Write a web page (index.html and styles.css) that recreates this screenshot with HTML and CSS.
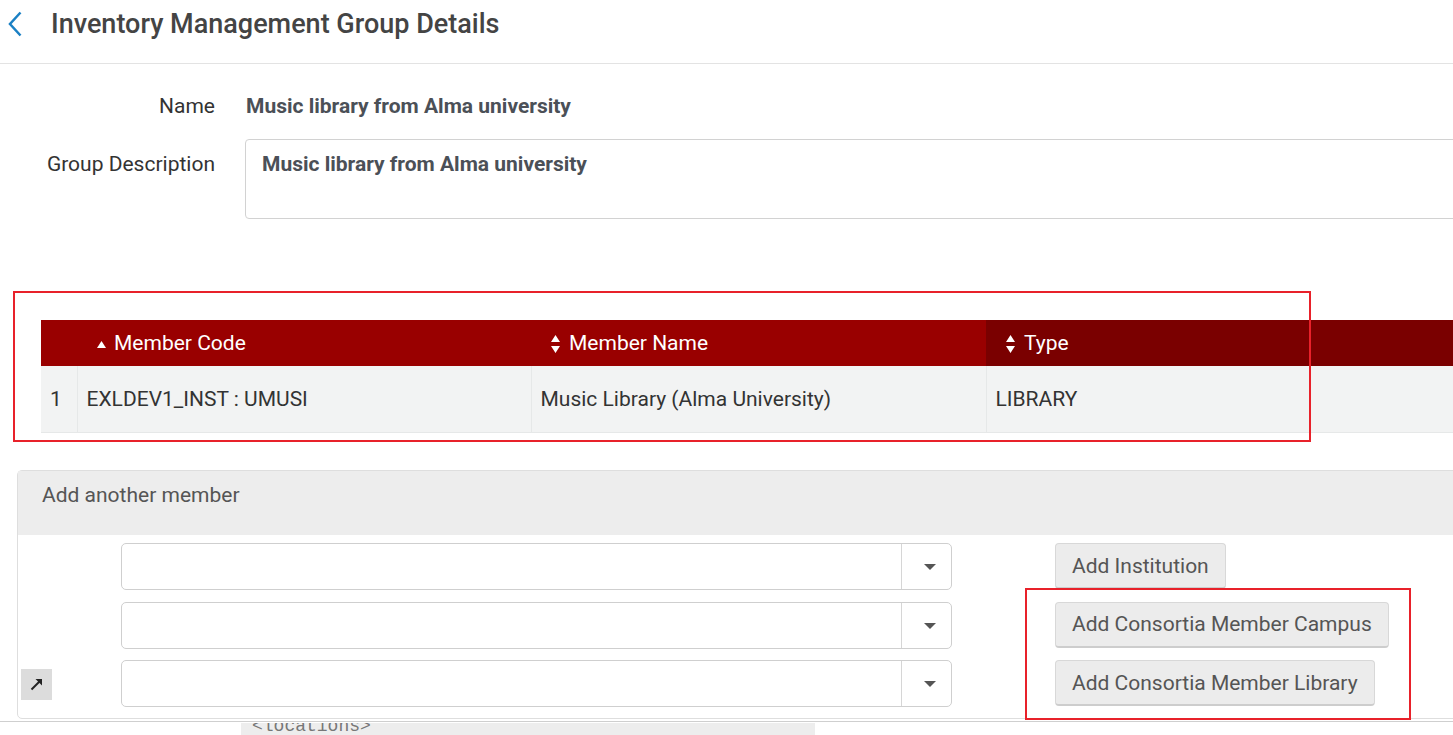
FILE: index.html
```html
<!DOCTYPE html>
<html lang="en">
<head>
    <meta charset="UTF-8">
    <meta name="viewport" content="width=device-width, initial-scale=1.0">
    <title>Inventory Management Group Details</title>
    <link rel="stylesheet" href="styles.css">
</head>
<body>
    <header class="page-header">
        <button class="back-btn" aria-label="Back">
            <svg width="16" height="26" viewBox="0 0 16 26"><path d="M13.5 1.5 L3 13 L13.5 24.5" fill="none" stroke="#1b80c4" stroke-width="2.5"/></svg>
        </button>
        <h1>Inventory Management Group Details</h1>
    </header>

    <section class="details">
        <div class="field-row name-row">
            <label class="field-label">Name</label>
            <div class="field-value">Music library from Alma university</div>
        </div>
        <div class="field-row desc-row">
            <label class="field-label desc-label">Group Description</label>
            <div class="desc-box">Music library from Alma university</div>
        </div>
    </section>

    <section class="members">
        <div class="annotation members-mark"></div>
        <table class="members-table">
            <colgroup>
                <col class="w-index">
                <col class="w-code">
                <col class="w-name">
                <col>
            </colgroup>
            <thead>
                <tr>
                    <th><span class="th-inner"></span></th>
                    <th class="th-sort"><span class="th-inner"><svg class="sort-up" width="9" height="7" viewBox="0 0 9 7"><path d="M0 7 L4.5 0 L9 7 Z" fill="#fff"/></svg>Member Code</span></th>
                    <th class="th-sort"><span class="th-inner"><svg class="sort-both" width="9" height="20" viewBox="0 0 9 20"><path d="M0 8 L4.5 1 L9 8 Z M0 12 L4.5 19 L9 12 Z" fill="#fff"/></svg>Member Name</span></th>
                    <th class="th-sort col-type"><span class="th-inner"><svg class="sort-both" width="9" height="20" viewBox="0 0 9 20"><path d="M0 8 L4.5 1 L9 8 Z M0 12 L4.5 19 L9 12 Z" fill="#fff"/></svg>Type</span></th>
                </tr>
            </thead>
            <tbody>
                <tr>
                    <td class="col-index">1</td>
                    <td>EXLDEV1_INST : UMUSI</td>
                    <td>Music Library (Alma University)</td>
                    <td>LIBRARY</td>
                </tr>
            </tbody>
        </table>
    </section>

    <section class="add-panel">
        <div class="panel-title">Add another member</div>
        <div class="panel-body">
            <div class="row-side"></div>
            <div class="select-box"><span class="select-text"></span><span class="select-caret"></span></div>
            <div class="row-action"><button class="btn">Add Institution</button></div>

            <div class="row-side"></div>
            <div class="select-box"><span class="select-text"></span><span class="select-caret"></span></div>
            <div class="row-action"><button class="btn">Add Consortia Member Campus</button></div>

            <div class="row-side">
                <span class="expand-btn">
                    <svg width="16" height="16" viewBox="0 0 16 16"><path d="M2.5 13.5 L10.5 5.5" stroke="#222" stroke-width="2"/><path d="M6.5 3 H13 V9.5 Z" fill="#222"/></svg>
                </span>
            </div>
            <div class="select-box"><span class="select-text"></span><span class="select-caret"></span></div>
            <div class="row-action"><button class="btn">Add Consortia Member Library</button></div>
        </div>
        <div class="annotation buttons-mark"></div>
    </section>

    <footer class="page-footer">
        <div class="code-strip">&lt;locations&gt;</div>
    </footer>
</body>
</html>
```

FILE: styles.css
```css
body {
    margin: 0;
    padding: 0;
    font-family: Roboto, "Noto Sans", Arial, sans-serif;
    color: #333;
    background: white;
    overflow: hidden;
    height: 735px;
}

.page-header {
    display: flex;
    align-items: flex-start;
    height: 63px;
    border-bottom: 1px solid #e3e3e3;
}

.back-btn {
    border: none;
    background: none;
    padding: 0;
    margin: 11px 0 0 7px;
    width: 16px;
    height: 26px;
    cursor: pointer;
}

.page-header h1 {
    margin: 8px 0 0 28px;
    font-size: 27px;
    line-height: 32px;
    font-weight: 500;
    color: #444;
}

.details {
    padding-top: 18px;
}

.field-row {
    display: flex;
    align-items: flex-start;
}

.field-label {
    width: 215px;
    text-align: right;
    font-size: 21px;
    line-height: 25px;
    color: #333;
    margin-right: 30px;
}

.name-row {
    height: 48px;
    align-items: center;
}

.field-value {
    font-size: 21px;
    line-height: 25px;
    font-weight: bold;
    color: #4b5057;
    margin-left: 1px;
}

.desc-row {
    margin-top: 9px;
}

.desc-label {
    padding-top: 13px;
}

.desc-box {
    flex: 1;
    height: 80px;
    margin-right: -20px;
    border: 1px solid #d2d2d2;
    border-radius: 4px;
    box-sizing: border-box;
    padding: 12px 16px;
    font-size: 21px;
    line-height: 25px;
    font-weight: bold;
    color: #4b5057;
}

.members {
    position: relative;
    margin-top: 101px;
    margin-left: 41px;
}

.annotation {
    position: absolute;
    border: 2px solid #e8212a;
    box-sizing: border-box;
    pointer-events: none;
}

.members-mark {
    left: -28px;
    top: -29px;
    width: 1298px;
    height: 151px;
}

.members-table {
    width: 1440px;
    table-layout: fixed;
    border-collapse: collapse;
    font-size: 21px;
}

.w-index {
    width: 36px;
}

.w-code {
    width: 454px;
}

.w-name {
    width: 455px;
}

.members-table th {
    background: #990000;
    color: white;
    font-weight: normal;
    text-align: left;
    height: 46px;
    padding: 0;
}

.th-inner {
    display: flex;
    align-items: center;
    padding-left: 20px;
}

.members-table th.col-type {
    background: #7a0000;
}

.sort-up {
    margin: 2px 8px 0 0;
}

.sort-both {
    margin: 2px 9px 0 0;
}

.members-table td {
    background: #f2f3f3;
    height: 66px;
    padding: 0 0 0 9px;
    border-left: 1px solid #e6e8e8;
    border-bottom: 1px solid #e6e8e8;
    color: #333;
}

.members-table td.col-index {
    border-left: none;
}

.add-panel {
    position: relative;
    margin: 37px -20px 0 17px;
    border: 1px solid #dedede;
    border-radius: 5px;
}

.panel-title {
    background: #ededed;
    height: 64px;
    box-sizing: border-box;
    padding: 12px 24px;
    font-size: 21px;
    line-height: 25px;
    color: #555;
}

.panel-body {
    display: grid;
    grid-template-columns: 103px 831px 1fr;
    row-gap: 11.5px;
    padding: 8px 0 11px 0;
}

.row-side {
    display: flex;
    align-items: center;
    padding-left: 3px;
}

.expand-btn {
    display: flex;
    align-items: center;
    justify-content: center;
    width: 31px;
    height: 31px;
    background: #dcdcdc;
    margin-top: 1px;
}

.select-box {
    display: flex;
    height: 47px;
    border: 1px solid #cfcfcf;
    border-radius: 5px;
    box-sizing: border-box;
}

.select-text {
    flex: 1;
    border-right: 1px solid #d6d6d6;
}

.select-caret {
    width: 49px;
    position: relative;
}

.select-caret::after {
    content: "";
    position: absolute;
    left: 22px;
    top: 20px;
    border-left: 6px solid transparent;
    border-right: 6px solid transparent;
    border-top: 6px solid #555;
}

.row-action {
    display: flex;
    align-items: flex-start;
    padding-left: 103px;
}

.btn {
    height: 46px;
    padding: 0 16px;
    font-family: Roboto, "Noto Sans", Arial, sans-serif;
    font-size: 21px;
    color: #555;
    background: #ececec;
    border: 1px solid #d8d8d8;
    border-bottom: 2px solid #cdcdcd;
    border-radius: 4px;
    cursor: pointer;
}

.buttons-mark {
    left: 1007px;
    top: 117px;
    width: 386px;
    height: 132px;
}

.page-footer {
    margin-top: 2px;
    border-top: 1px solid #cfcfcf;
}

.code-strip {
    margin-left: 241px;
    width: 574px;
    height: 13px;
    background: #ededed;
    font-family: "Liberation Mono", monospace;
    font-size: 18px;
    line-height: 6px;
    color: #777;
    padding-left: 11px;
    box-sizing: border-box;
    overflow: hidden;
    margin-top: 1px;
}
```
